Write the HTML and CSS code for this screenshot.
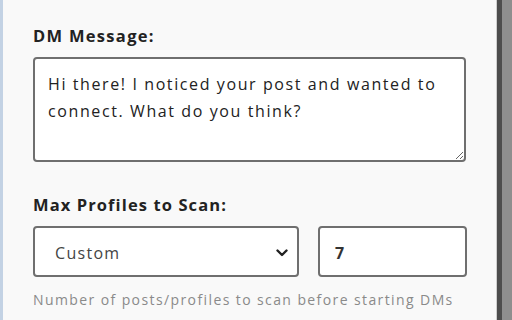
FILE: index.html
```html
<!DOCTYPE html>
<html>
<head>
<meta charset="utf-8">
<link rel="stylesheet" href="styles.css">
</head>
<body>
<div class="frame">
  <div class="panel">
    <div class="field">
      <label class="label">DM Message:</label>
      <textarea class="message">Hi there! I noticed your post and wanted to connect. What do you think?</textarea>
    </div>
    <div class="field field-scan">
      <label class="label">Max Profiles to Scan:</label>
      <div class="row">
        <div class="select">
          <span class="select-text">Custom</span>
          <svg class="chevron" width="12" height="8" viewBox="0 0 12 8"><path d="M1.5 1.5 L6 6 L10.5 1.5" fill="none" stroke="#222" stroke-width="2.4" stroke-linecap="round" stroke-linejoin="round"/></svg>
        </div>
        <div class="number">7</div>
      </div>
      <div class="hint">Number of posts/profiles to scan before starting DMs</div>
    </div>
  </div>
  <div class="scrollbar">
    <div class="sb-light"></div>
    <div class="sb-dark"></div>
    <div class="sb-mid"></div>
  </div>
</div>
</body>
</html>
```

FILE: styles.css
```css
html, body {
  margin: 0;
  padding: 0;
  width: 512px;
  height: 320px;
  overflow: hidden;
  background: #f9f9f9;
  font-family: "Open Sans", "Noto Sans", sans-serif;
  color: #222;
}
.frame {
  display: flex;
  height: 320px;
  border-left: 3px solid #c3d2e4;
  box-sizing: border-box;
}
.panel {
  flex: 1;
  padding: 26px 0 0 30px;
  box-sizing: border-box;
}
.field {
  display: flex;
  flex-direction: column;
}
.label {
  font-weight: 700;
  font-size: 16.5px;
  line-height: 20px;
  letter-spacing: 1.3px;
  color: #222;
  margin-bottom: 11px;
}
.field-scan .label {
  letter-spacing: 1.1px;
}
.message {
  width: 433px;
  height: 105px;
  box-sizing: border-box;
  border: 2px solid #6f6f6f;
  border-radius: 4px;
  background: #fff;
  padding: 12px 8px 12px 13px;
  font-family: "Open Sans", "Noto Sans", sans-serif;
  font-size: 16px;
  line-height: 27px;
  letter-spacing: 1.6px;
  color: #222;
  resize: vertical;
  outline: none;
}
.field-scan {
  margin-top: 33px;
}
.row {
  display: flex;
  gap: 19px;
}
.select, .number {
  height: 51px;
  box-sizing: border-box;
  border: 2px solid #6f6f6f;
  border-radius: 4px;
  background: #fff;
  display: flex;
  align-items: center;
  font-size: 16px;
  letter-spacing: 1.3px;
  padding-top: 3px;
}
.select {
  width: 266px;
  padding-left: 20px;
  padding-right: 9px;
  justify-content: space-between;
  color: #444;
}
.number {
  width: 149px;
  padding-left: 15px;
  font-weight: 700;
  color: #333;
}
.chevron {
  display: block;
}
.hint {
  margin-top: 13px;
  font-size: 14px;
  letter-spacing: 1.4px;
  color: #8a8a8a;
}
.scrollbar {
  width: 16px;
  display: flex;
}
.sb-light {
  width: 1px;
  background: #cfcfcf;
}
.sb-dark {
  width: 5px;
  background: #4d4d4d;
}
.sb-mid {
  flex: 1;
  background: #8e8e8e;
}
```
